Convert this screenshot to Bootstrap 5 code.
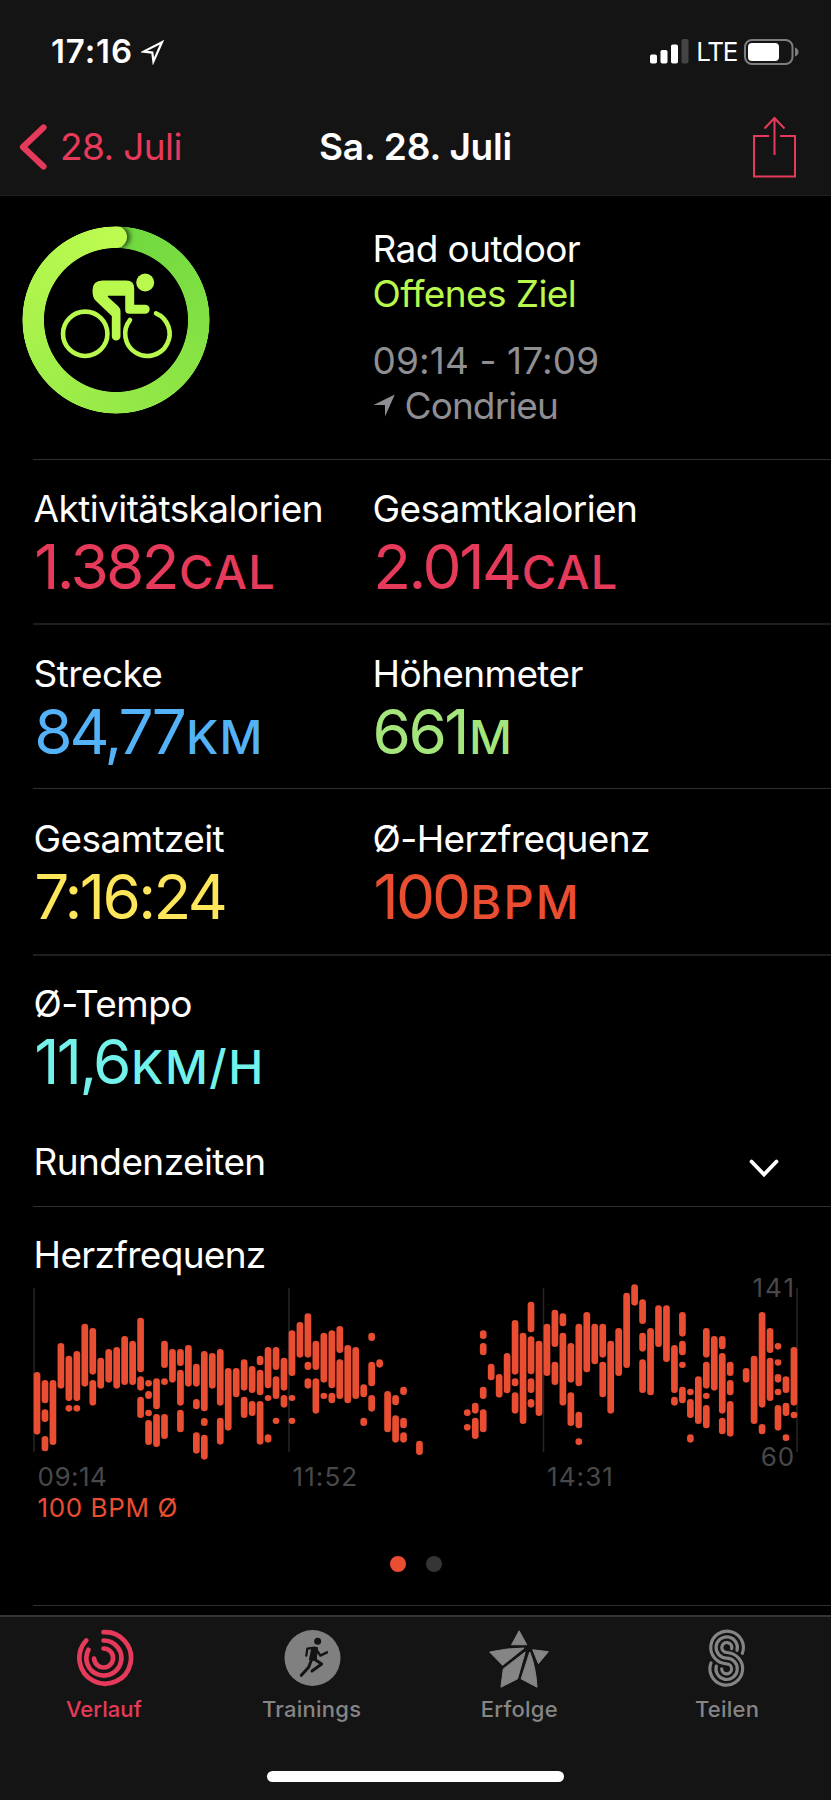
<!DOCTYPE html>
<html lang="de" data-bs-theme="dark">
<head>
<meta charset="utf-8">
<meta name="viewport" content="width=device-width, initial-scale=1">
<title>Sa. 28. Juli</title>
<link rel="stylesheet" href="https://cdn.jsdelivr.net/npm/bootstrap@5.3.0/dist/css/bootstrap.min.css">
<style>
  :root { --bar: #141414; --line: #2e2e2e; --pink: #e63a5a; --lime: #b9f94e; --heart: #ea4e32; --dim: #48484a; }
  body { background: #000; color: #fff; font-family: Inter, "Liberation Sans", sans-serif; font-size: 37px; line-height: 45px; letter-spacing: -.6px; width: 831px; height: 1800px; overflow: hidden; }
  svg { display: block; flex: none; }
  .top-area { background: var(--bar); height: 196px; border-bottom: 1px solid #202020; }
  .status { height: 103px; padding: 0 32px 0 51px; }
  .clock { font-size: 33px; font-weight: 600; letter-spacing: .9px; }
  .carrier { font-size: 26px; letter-spacing: -1.3px; margin-left: 7px; }
  .battery { margin-left: 7px; }
  .title-bar { display: grid; grid-template-columns: 319px 194px 1fr; height: 87px; padding-right: 34px; }
  .back-link { color: var(--pink); text-decoration: none; letter-spacing: -.6px; }
  .page-title { font-weight: 600; letter-spacing: -.2px; white-space: nowrap; }
  .inset { margin-left: 33px; border-bottom: 1px solid var(--line); }
  .two-col { display: grid; grid-template-columns: 339px 1fr; }
  .overview { height: 264px; }
  .goal-ring { position: relative; width: 188px; height: 188px; margin: 30px 0 0 -11px; }
  .ring-fill { position: absolute; inset: 0; border-radius: 50%; background: conic-gradient(#6fd83f, #bdfb50); -webkit-mask: radial-gradient(circle closest-side, #0000 71.6px, #000 72.4px, #000 93.2px, #0000 94px); mask: radial-gradient(circle closest-side, #0000 71.6px, #000 72.4px, #000 93.2px, #0000 94px); }
  .ring-fill::after { content: ""; position: absolute; left: 83px; top: 0; width: 22px; height: 22px; border-radius: 50%; background: #bdfb50; box-shadow: 3px 0 5px rgba(0,0,0,.65); clip-path: inset(-4px -14px -4px 9px); }
  .goal-ring svg { position: absolute; inset: 0; }
  .overview-text { padding: 30px 0 0 .5px; white-space: nowrap; }
  .lime { color: var(--lime); }
  .soft { color: #8e8e93; }
  .when { margin-top: 22px; letter-spacing: .1px; }
  .where { letter-spacing: -.9px; }
  .metric-row { height: 165px; padding-top: 26px; white-space: nowrap; }
  .metric-row > div { padding-left: .6px; }
  .metric-row.faint { border-bottom: 2px solid #1e1e1e; }
  .metric-row.short { height: 164px; }
  .metric-row.tall { height: 167px; padding-top: 27px; }
  .metric-row.last { height: 183px; padding-top: 25px; margin-left: 33px; }
  .figure-text { font-size: 62px; line-height: 70px; letter-spacing: -2.6px; padding-left: .6px; position: relative; top: .5px; }
  .figure-text small { font-size: 47px; font-weight: 500; line-height: 1; letter-spacing: 1.2px; margin-left: 2px; }
  .v-total { letter-spacing: -2.4px; }
  .v-dist { color: #54b3f8; letter-spacing: -3px; }
  .v-climb { color: #a5e67c; padding-left: 0; }
  .v-time { color: #fde659; }
  .v-pulse { color: var(--heart); letter-spacing: -2.9px; padding-left: 1px; }
  .v-pulse small { letter-spacing: 2.2px; }
  .v-pace { color: #72f2ea; }
  .v-pace small { letter-spacing: 1.6px; }
  .pink { color: var(--pink); }
  .laps { height: 68px; padding: 0 52px 0 .6px; letter-spacing: -.6px; }
  .laps svg { margin-top: 20px; }
  .heart { height: 399px; padding-top: 25px; }
  .heart-title { padding-left: .6px; letter-spacing: -.7px; }
  .hr-chart { position: relative; height: 177px; margin-top: 6px; }
  .hr-chart svg { position: absolute; left: -33px; top: -3px; }
  .hr-limit { position: absolute; right: 37px; color: var(--dim); font-size: 26px; line-height: 30px; }
  .hr-max { top: -10.5px; letter-spacing: 2px; margin-right: -2px; }
  .hr-min { top: 158.5px; letter-spacing: .9px; margin-right: -1px; }
  .axis { display: grid; grid-template-columns: 255px 254.5px 1fr; padding: 1px 0 0 4.5px; color: var(--dim); font-size: 26px; line-height: 31px; letter-spacing: .5px; }
  .axis span + span { letter-spacing: 1.1px; }
  .avg { color: var(--heart); font-size: 26px; line-height: 31px; letter-spacing: .6px; padding-left: 4.5px; }
  .pager { gap: 19.5px; margin-top: 33px; padding-right: 32px; }
  .pager i { width: 16px; height: 16px; border-radius: 50%; background: #353535; }
  .pager i.on { background: var(--heart); }
  .tab-bar { height: 185px; margin-top: 9px; background: var(--bar); border-top: 2px solid #343434; color: #858585; font-size: 22px; font-weight: 500; line-height: 28px; letter-spacing: .25px; }
  .tab-bar .tabs { display: grid; grid-template-columns: repeat(4, 1fr); height: 153.5px; }
  .tab-bar a { color: inherit; text-decoration: none; padding-top: 11px; }
  .tab-bar a.active { color: var(--pink); letter-spacing: 0; }
  .tab-bar svg { margin-bottom: 6.5px; }
  .home-pill { width: 297px; height: 11.5px; border-radius: 6px; background: #fff; }
</style>
</head>
<body>

<header class="top-area">
  <div class="status d-flex align-items-center">
    <span class="clock">17:16</span>
    <svg class="ms-2" width="25" height="26" viewBox="0 0 25 26" fill="none" stroke="#fff" stroke-width="2.2"><path d="M21 3.2 2.500 12.600 11.300 13.600 12.400 22.500Z"/></svg>
    <svg class="ms-auto" width="39" height="25" viewBox="0 0 39 25"><g fill="#fff"><rect y="15.5" width="7" height="9" rx="1.8"/><rect x="10.5" y="11" width="7" height="13.5" rx="1.8"/><rect x="21" y="5.5" width="7" height="19" rx="1.8"/></g><rect x="31.5" width="7" height="24.5" rx="1.8" fill="#444"/></svg>
    <span class="carrier">LTE</span>
    <svg class="battery" width="55" height="26" viewBox="0 0 55 26"><rect x="1" y="1" width="47.5" height="24" rx="7" fill="none" stroke="#7d7d7d" stroke-width="2"/><rect x="4" y="4" width="31" height="18" rx="4" fill="#fff"/><path d="M51 8.5Q54.5 10 54.5 13T51 17.500Z" fill="#7d7d7d"/></svg>
  </div>
  <nav class="title-bar align-items-center" aria-label="Navigation">
    <a class="back-link d-flex align-items-center" href="#">
      <svg width="60" height="46" viewBox="0 0 60 46" fill="none" stroke="currentColor" stroke-width="6.200" stroke-linecap="round" stroke-linejoin="round"><path d="M43.500 3.500 23 23 43.500 42.500"/></svg>
      28. Juli
    </a>
    <span class="page-title">Sa. 28. Juli</span>
    <svg class="ms-auto" width="44" height="62" viewBox="0 0 44 62" fill="none" stroke="#e63a5a" stroke-width="2"><path d="M16 20H1V60.500H42V20H27M21.500 2V39M11.500 12.500 21.500 2 31.500 12.500"/></svg>
  </nav>
</header>

<main>
  <section class="inset two-col overview">
    <div class="goal-ring">
      <div class="ring-fill"></div>
      <svg width="188" height="188" viewBox="22.500 226.500 188 188">
        <g fill="none" stroke="#b9f94e" stroke-width="4.600" stroke-linecap="round">
          <circle cx="85.700" cy="334.300" r="22.200"/>
          <path d="M130.500 320.500A22.200 22.200 0 1 0 156.500 313.800"/>
        </g>
        <g fill="#b9f94e">
          <circle cx="145.700" cy="283" r="9"/>
          <path d="M103 281H127Q134.700 281 134.700 289V305.300H145.700A4.500 4.500 0 0 1 145.700 314.300H129.700Q125.700 314.300 125.700 310V296.300H109Q107.500 296.300 108.500 297.500L119 307Q121 309 121 312V336.700A4.350 4.350 0 0 1 112.300 336.700V316.500L96 301Q93 298 93 291Q93 281 103 281Z"/>
        </g>
      </svg>
    </div>
    <div class="overview-text">
      <div>Rad outdoor</div>
      <div class="lime">Offenes Ziel</div>
      <div class="soft when">09:14 - 17:09</div>
      <div class="soft where d-flex">
        <svg class="me-2" width="24" height="45" viewBox="0 0 24 45" fill="currentColor"><path d="M21.800 11.500 12 33.500V22H.5Z"/></svg>
        <span>Condrieu</span>
      </div>
    </div>
  </section>

  <section class="inset two-col metric-row faint">
    <div>Aktivitätskalorien<div class="figure-text pink">1.382<small>CAL</small></div></div>
    <div>Gesamtkalorien<div class="figure-text pink v-total">2.014<small>CAL</small></div></div>
  </section>
  <section class="inset two-col metric-row short">
    <div>Strecke<div class="figure-text v-dist">84,77<small>KM</small></div></div>
    <div>Höhenmeter<div class="figure-text v-climb">661<small>M</small></div></div>
  </section>
  <section class="inset two-col metric-row faint tall">
    <div>Gesamtzeit<div class="figure-text v-time">7:16:24</div></div>
    <div>Ø-Herzfrequenz<div class="figure-text v-pulse">100<small>BPM</small></div></div>
  </section>
  <section class="two-col metric-row last">
    <div>Ø-Tempo<div class="figure-text v-pace">11,6<small>KM/H</small></div></div>
  </section>

  <section class="inset laps d-flex justify-content-between">
    <span>Rundenzeiten</span>
    <svg width="30" height="20" viewBox="0 0 30 20" fill="none" stroke="#fff" stroke-width="3.800" stroke-linecap="round"><path d="M2.500 2.500 15 15.500 27.500 2.500"/></svg>
  </section>

  <section class="inset heart">
    <div class="heart-title">Herzfrequenz</div>
    <div class="hr-chart">
      <svg id="hr" width="831" height="182" viewBox="0 1280 831 182" aria-hidden="true"></svg>
      <span class="hr-limit hr-max">141</span>
      <span class="hr-limit hr-min">60</span>
    </div>
    <div class="axis"><span>09:14</span><span>11:52</span><span>14:31</span></div>
    <div class="avg">100 BPM Ø</div>
    <div class="pager d-flex justify-content-center"><i class="on"></i><i></i></div>
  </section>
</main>

<footer class="tab-bar">
  <div class="tabs">
    <a class="active d-flex flex-column align-items-center" href="#">
      <svg width="60" height="60" viewBox="74.800 1628 60 60" fill="none" stroke="currentColor" stroke-width="4.700" stroke-linecap="round">
        <path d="M104.300 1632.200A25.800 25.800 0 1 1 87 1640.500M104.300 1640.500A17.500 17.500 0 1 1 89.200 1649.800M104.300 1648.500A9.500 9.500 0 1 1 94.900 1658.500"/>
      </svg>Verlauf
    </a>
    <a class="d-flex flex-column align-items-center" href="#">
      <svg width="60" height="60" viewBox="846 84 180 180" fill="none" stroke="#141414" stroke-linecap="round" stroke-linejoin="round">
        <circle cx="937.500" cy="174" r="84" fill="#808080" stroke="none"/>
        <circle cx="953" cy="124" r="10.500" fill="#141414" stroke="none"/>
        <path d="M944 143 922 146 919 167M948 147 961 167 981 157" stroke-width="7"/>
        <path d="M937 144 951 144 947 180 930 178Z" fill="#141414" stroke-width="6"/>
        <path d="M935 178 926 202 904 226M942 177 965 192 936 213" stroke-width="9"/>
      </svg>Trainings
    </a>
    <a class="d-flex flex-column align-items-center" href="#">
      <svg width="62" height="60" viewBox="219 84 187 180" fill="#858585" stroke="#858585" stroke-width="3" stroke-linejoin="round">
        <path d="M313 92 336 134H290ZM224 156Q275 144 328 144L263 196ZM354 149 401 155 371 191ZM331 156 265 207 258 262 308 237ZM345 156 319 237 367 262Q363 200 345 156Z"/>
      </svg>Erfolge
    </a>
    <a class="d-flex flex-column align-items-center" href="#">
      <svg width="60" height="60" viewBox="847 84 180 180" fill="none" stroke="#858585" stroke-width="9.500" stroke-linecap="round">
        <path d="M983 160A49 49 0 1 0 936 191.500A15 15 0 1 1 921 206.500"/>
        <path d="M967 151A32 32 0 1 0 936 174.500A32 32 0 1 1 905 198"/>
        <path d="M951 146A15 15 0 1 0 936 157.500A49 49 0 1 1 889 189"/>
      </svg>Teilen
    </a>
  </div>
  <div class="home-pill mx-auto"></div>
</footer>

<script src="https://cdn.jsdelivr.net/npm/bootstrap@5.3.0/dist/js/bootstrap.bundle.min.js"></script>
<script>
  // Heart-rate ranges: one entry per time slot, each a list of start-end pairs in third-pixels below the chart origin.
  const slots = [
    "306-494","330-400 418-456 498-544","330-525","219-356","257-393 405-425","243-393 405-425","161-350","174-314 330-407",
    "263-356","237-338","231-356","198-345","212-345","143-307 319-362 380-444","330-350 363-387 419-439 450-525","325-418 432-531",
    "212-294 325-345 432-507","237-338","237-288 299-407 419-487","225-350","281-350 387-418 487-551","243-424 444-468 494-569",
    "249-356","237-407 443-524","294-482","294-382","268-362 380-444","288-369 393-438","257-286 299-376 393-524","231-355 375-393 493-518",
    "231-300 319-387 443-462","263-362 375-413","181-318 375-393 443-462","156-263","130-263 275-300 325-356","212-300 325-431",
    "188-338 368-387","181-355 368-400","168-249 268-387","225-400","231-387","343-382 443-468","188-213 275-349 375-425","268-293",
    "363-487","375-406 436-518","350-375 443-475 487-518","","512-555","","","","","",
    "418-438 462-482","398-431 443-507","181-207 219-256 350-387 418-487","281-331","312-383","249-370","150-314 325-349 367-431",
    "188-462","95-187 199-313 325-369 387-413","212-438","161-318","119-231 275-345","130-169 188-407","219-338 367-468",
    "161-349 425-475 505-525","126-307","161-283","161-263 275-382","212-431","174-318","68-294","43-107","88-162 188-245 268-369",
    "174-376","106-231","106-276","225-369 380-407","126-200 212-256 275-294 350-400","356-376 387-444 493-518","319-462",
    "174-263 275-356 368-387 405-475","198-362","198-238 249-431 443-493","275-318 330-376 393-500","","294-338","257-462",
    "126-413 462-493","174-249 263-393","219-239 268-287 312-338 356-376 405-482","319-369 398-438 493-513","231-407 425-445"
  ];
  let marks = [34, 289, 543.5, 797].map(x => `<path d="M${x} 1288V1452" stroke="#262626" stroke-width="1.500"/>`).join("");
  slots.forEach((s, i) => {
    if (!s) return;
    const x = 33.65 + i * 7.968;
    s.split(" ").forEach(r => {
      const [a, b] = r.split("-").map(Number);
      marks += `<rect x="${x.toFixed(2)}" y="${(1270 + a / 3).toFixed(2)}" width="6.7" height="${((b - a) / 3).toFixed(2)}" rx="3.3" fill="#ea4e32"/>`;
    });
  });
  document.getElementById("hr").innerHTML = marks;
</script>
</body>
</html>
